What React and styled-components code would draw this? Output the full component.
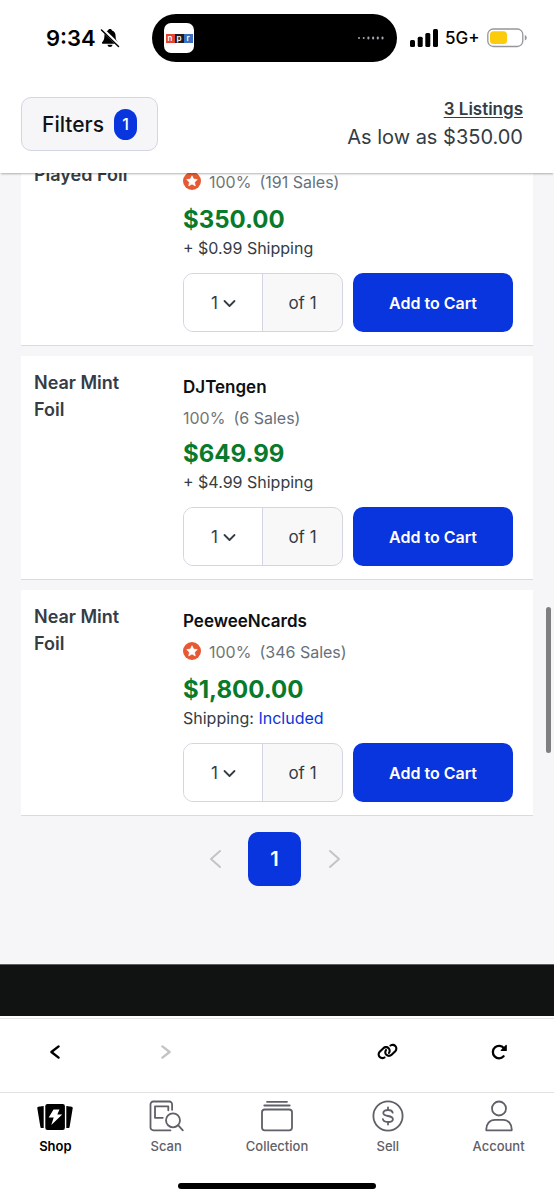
import React from 'react';
import styled, { createGlobalStyle, css } from 'styled-components';
import { FaLink } from 'react-icons/fa6';

const colors = {
  blue: '#0835dd',
  green: '#087a2b',
  ink: '#343c45',
  muted: '#66707c',
  border: '#d3d5e2',
  page: '#f6f6f9',
};

const GlobalStyle = createGlobalStyle`
  * {
    box-sizing: border-box;
  }

  body {
    margin: 0;
    background: #fff;
    color: ${colors.ink};
    font-family: Inter, "Liberation Sans", sans-serif;
  }

  button,
  select {
    font-family: inherit;
    cursor: pointer;
  }

  svg {
    display: block;
    flex-shrink: 0;
  }
`;

const Page = styled.div`
  display: flex;
  flex-direction: column;
  min-height: 100vh;
`;

/* status bar */

const StatusBar = styled.div`
  display: grid;
  grid-template-columns: 1fr 245px 1fr;
  align-items: center;
  padding: 14px 5px 14px 0;
  color: #000;
`;

const StatusSide = styled.div`
  display: flex;
  align-items: center;
  gap: ${(props) => props.$gap}px;
  padding-left: ${(props) => props.$start}px;
  white-space: nowrap;
`;

const Time = styled.span`
  font-size: 22px;
  font-weight: 600;
`;

const Network = styled.span`
  font-size: 17px;
  font-weight: 500;
`;

const Island = styled.div`
  display: flex;
  align-items: center;
  justify-content: space-between;
  height: 48px;
  padding: 0 12px;
  border-radius: 24px;
  background: #000;
`;

const NprTile = styled.div`
  display: flex;
  align-items: center;
  justify-content: center;
  width: 30px;
  height: 30px;
  border-radius: 7px;
  background: #fff;
`;

const NprLetter = styled.span`
  width: 9px;
  background: ${(props) => props.$color};
  color: #fff;
  font-size: 8px;
  font-weight: 600;
  line-height: 9px;
  text-align: center;
`;

/* listings header */

const Header = styled.header`
  position: sticky;
  top: 0;
  z-index: 1;
  display: flex;
  align-items: center;
  justify-content: space-between;
  padding: 20px 31px 21px 21px;
  background: #fff;
  box-shadow: 0 2px 2px -1px rgba(0, 0, 0, 0.3);
`;

const FiltersButton = styled.button`
  display: flex;
  align-items: center;
  gap: 10px;
  height: 54px;
  padding: 0 20px;
  border: 1px solid ${colors.border};
  border-radius: 10px;
  background: ${colors.page};
  color: #101216;
  font-size: 21px;
  font-weight: 500;
`;

const FilterCount = styled.span`
  width: 23px;
  border-radius: 12px;
  background: ${colors.blue};
  color: #fff;
  font-size: 16px;
  line-height: 31px;
`;

const Summary = styled.div`
  text-align: right;
`;

const ListingsLink = styled.a`
  display: block;
  color: ${colors.ink};
  font-size: 17px;
  font-weight: 600;
  line-height: 26px;
  text-underline-offset: 2px;
`;

const LowPrice = styled.div`
  font-size: 20px;
  line-height: 30px;
`;

/* listings */

const Main = styled.main`
  flex: 1;
  overflow: hidden;
  background: ${colors.page};
`;

const List = styled.ul`
  display: flex;
  flex-direction: column;
  gap: 10px;
  margin: -25px 21px 0;
  padding: 0;
  list-style: none;
`;

const Card = styled.li`
  display: grid;
  grid-template-columns: 149px 1fr;
  padding: 13px 20px 13px 13px;
  border-bottom: 1px solid #d9dbe0;
  background: #fff;
`;

const Condition = styled.div`
  max-width: 110px;
  font-size: 18px;
  font-weight: 600;
  line-height: 27px;
`;

const Details = styled.div`
  padding-top: ${(props) => (props.$compact ? 2 : 6)}px;
`;

const Seller = styled.div`
  color: #0d0f12;
  font-size: 17px;
  font-weight: 600;
  line-height: 24px;
`;

const Rating = styled.div`
  display: flex;
  align-items: center;
  gap: 8px;
  padding: 7px 0 ${(props) => (props.$starred ? 2 : 0)}px;
  color: ${colors.muted};
  font-size: 16px;
  line-height: 24px;

  > svg {
    margin-bottom: 3px;
  }
`;

const Percent = styled.span`
  color: #757575;
`;

const Price = styled.div`
  padding-top: 8px;
  color: ${colors.green};
  font-size: 24px;
  font-weight: 700;
  line-height: 32px;
`;

const Shipping = styled.div`
  font-size: 16px;
  line-height: 24px;
`;

const Included = styled.span`
  color: ${colors.blue};
`;

const Actions = styled.div`
  display: grid;
  grid-template-columns: 1fr 1fr;
  gap: 10px;
  padding-top: 13px;
`;

const Quantity = styled.label`
  position: relative;
  display: grid;
  grid-template-columns: 1fr 1fr;
  height: 59px;
  overflow: hidden;
  border: 1px solid ${colors.border};
  border-radius: 10px;
  background: #f8f8f9;
  font-size: 17px;
`;

const QuantitySelect = styled.select`
  appearance: none;
  padding: 0 0 0 27px;
  border: 0;
  border-right: 1px solid ${colors.border};
  border-radius: 0;
  background: #fff;
  color: ${colors.ink};
  font-size: 17px;
`;

const SelectArrow = styled.svg`
  position: absolute;
  top: 25px;
  left: 39px;
  pointer-events: none;
`;

const Available = styled.span`
  align-self: center;
  text-align: center;
`;

const CartButton = styled.button`
  padding: 0;
  border: 0;
  border-radius: 10px;
  background: ${colors.blue};
  color: #fff;
  font-size: 16px;
  font-weight: 600;
`;

const Pagination = styled.nav`
  display: flex;
  align-items: center;
  justify-content: center;
  gap: 21px;
  padding: 16px 5px 78px 0;
`;

const PageButton = styled.button`
  display: flex;
  align-items: center;
  justify-content: center;
  width: ${(props) => (props.$current ? 53 : 24)}px;
  height: 54px;
  padding: 0;
  border: 0;
  border-radius: 10px;
  background: ${(props) => (props.$current ? colors.blue : 'none')};
  color: ${(props) => (props.$current ? '#fff' : '#c3c4c8')};
  font-size: 20px;
  font-weight: 600;
`;

const Footer = styled.footer`
  height: 52px;
  border-top: 1px solid #5c6063;
  background: #111212;
`;

/* bottom bars */

const fiveColumns = css`
  display: grid;
  grid-template-columns: repeat(5, 1fr);
  justify-items: center;
`;

const BrowserBar = styled.div`
  ${fiveColumns}
  height: 75px;
  margin-top: 2px;
  border-top: 1px solid #e6e6e6;
  border-bottom: 1px solid #e2e2e3;
`;

const IconButton = styled.button`
  display: flex;
  align-items: center;
  justify-content: center;
  grid-column: ${(props) => props.$column};
  width: 44px;
  margin-bottom: 8px;
  padding: 0;
  border: 0;
  background: none;
  color: #000;

  &:disabled {
    color: #c4c4c4;
  }
`;

const TabBar = styled.nav`
  ${fiveColumns}
  padding-top: 6px;
`;

const Tab = styled.a`
  display: flex;
  flex-direction: column;
  align-items: center;
  gap: 3px;
  color: ${(props) => (props.$active ? '#000' : '#5f6068')};
  font-size: 13px;
  font-weight: ${(props) => (props.$active ? 600 : 500)};
  line-height: 20px;
  text-decoration: none;
`;

const HomeIndicator = styled.div`
  width: 198px;
  height: 6px;
  margin: 27px auto 11px;
  border-radius: 3px;
  background: #000;
`;

const ScrollThumb = styled.div`
  position: fixed;
  top: 607px;
  right: 3px;
  width: 5px;
  height: 146px;
  border-radius: 3px;
  background: #7f7f81;
`;

/* icons */

const BellSlash = () => (
  <svg width="20" height="20" viewBox="0 0 20 20">
    <path
      d="M10 1c-1.2 0-1.8.7-2 1.6C5.600 3.400 4.400 5.400 4.400 8c0 3.600-.9 4.700-2.100 6-.7.8-.3 1.800.8 1.800h13.800c1.100 0 1.500-1 .8-1.800-1.200-1.300-2.100-2.400-2.100-6 0-2.600-1.200-4.600-3.600-5.400C11.800 1.700 11.200 1 10 1zM7.500 16.800c.2 1.400 1.200 2.200 2.500 2.200s2.300-.8 2.500-2.200z"
      fill="#000"
    />
    <path d="M2.500 1.500 19.500 18" stroke="#fff" strokeWidth="3.600" />
    <path d="M1.500 2 18.500 18.500" stroke="#000" strokeWidth="1.500" strokeLinecap="round" />
  </svg>
);

const Signal = () => (
  <svg width="28" height="18" viewBox="0 0 28 18">
    <rect x="0" y="11" width="5" height="7" rx="1.500" />
    <rect x="7.700" y="7.700" width="5" height="10.300" rx="1.500" />
    <rect x="15.300" y="4" width="5" height="14" rx="1.500" />
    <rect x="23" y="0" width="5" height="18" rx="1.500" />
  </svg>
);

const Battery = () => (
  <svg width="40" height="20" viewBox="0 0 40 20" fill="none">
    <rect x=".8" y="1" width="35" height="17.500" rx="5.500" stroke="#96969a" strokeWidth="1.300" />
    <rect x="3" y="3.300" width="17" height="12.800" rx="3.500" fill="#fccb0b" />
    <path d="M37.800 7v5.500c1.200-.4 1.900-1.500 1.900-2.750S39 7.400 37.800 7z" fill="#96969a" />
  </svg>
);

const AudioDots = () => (
  <svg width="28" height="4" viewBox="0 0 28 4" fill="#aaa2b2">
    {[2, 6.7, 11.4, 16.1, 20.8, 25.5].map((x, i) => (
      <rect key={x} x={x - 1} y={i < 2 ? 1 : 0.5} width="2" height={i < 2 ? 2 : 3} rx="1" />
    ))}
  </svg>
);

const StarBadge = () => (
  <svg width="18" height="18" viewBox="0 0 18 18">
    <circle cx="9" cy="9" r="9" fill="#e65a33" />
    <path
      d="m9 3.700 1.600 3.400 3.700.5-2.700 2.600.7 3.700L9 12.100l-3.300 1.800.7-3.700-2.700-2.600 3.700-.5z"
      fill="#fff"
      stroke="#fff"
      strokeWidth=".6"
      strokeLinejoin="round"
    />
  </svg>
);

const Chevron = ({ flip, width, height, stroke }) => (
  <svg
    width={width}
    height={height}
    viewBox={`0 0 ${width} ${height}`}
    fill="none"
    stroke="currentColor"
    strokeWidth={stroke}
    strokeLinecap="round"
    strokeLinejoin="round"
  >
    <path
      d={
        flip
          ? `M${stroke} ${stroke} ${width - stroke} ${height / 2} ${stroke} ${height - stroke}`
          : `M${width - stroke} ${stroke} ${stroke} ${height / 2} ${width - stroke} ${height - stroke}`
      }
    />
  </svg>
);

const Reload = () => (
  <svg width="16" height="16" viewBox="0 0 16 16">
    <path
      d="M12.900 4.200A6.200 6.200 0 1 0 12.600 12.300"
      fill="none"
      stroke="currentColor"
      strokeWidth="2.300"
      strokeLinecap="round"
    />
    <path
      d="M15.200 1.500v4.900h-4.900z"
      fill="currentColor"
      stroke="currentColor"
      strokeWidth="1.200"
      strokeLinejoin="round"
    />
  </svg>
);

const lineProps = {
  fill: 'none',
  stroke: 'currentColor',
  strokeWidth: 1.8,
  strokeLinecap: 'round',
  strokeLinejoin: 'round',
};

const ShopIcon = () => (
  <svg width="36" height="34" viewBox="0 0 36 34" fill="currentColor">
    <rect x="8.300" y="5" width="19.600" height="26" rx="2.200" />
    <path d="M1.300 7.800 6.700 7v22h-2c-.7 0-1.200-.4-1.300-1.100L.3 9.300C.2 8.500.6 7.900 1.300 7.800z" />
    <path d="m34.700 7.800-5.400-.8v22h2c.7 0 1.200-.4 1.300-1.100l3.100-18.600c.1-.8-.3-1.400-1-1.500z" />
    <path d="M16.500 10.500h6l-2.200 5h4.900L14.300 26l2.400-7.500h-5z" fill="#fff" />
  </svg>
);

const ScanIcon = () => (
  <svg width="36" height="34" viewBox="-1 0 36 34" {...lineProps}>
    <path d="M21.500 31.300H4.300A2.800 2.800 0 0 1 1.500 28.500V5.300a2.800 2.800 0 0 1 2.800-2.800h16a2.800 2.800 0 0 1 2.800 2.800v5.500" />
    <path d="M13.800 18.800H6V7.300h13.300v4" />
    <circle cx="24" cy="21.300" r="7" />
    <path d="m29.300 26.300 4.500 5" />
  </svg>
);

const CollectionIcon = () => (
  <svg width="36" height="34" viewBox="0 0 36 34" {...lineProps}>
    <path d="M8 2.800h20M5.300 6.500h25.400" />
    <rect x="3" y="10.500" width="30" height="20.800" rx="2.800" />
  </svg>
);

const SellIcon = () => (
  <svg width="36" height="34" viewBox="0 0 36 34" {...lineProps}>
    <circle cx="18" cy="17" r="14.600" />
    <path d="M18 8.500v2.500M18 23v2.500M22.700 13.700c-.4-1.700-2-2.700-4.700-2.700-2.800 0-4.700 1.100-4.700 3s1.700 2.500 4.700 3 4.900 1.300 4.900 3.200-2.100 2.800-4.900 2.800-4.800-1-5.100-2.800" />
  </svg>
);

const AccountIcon = () => (
  <svg width="36" height="34" viewBox="0 0 36 34" {...lineProps}>
    <circle cx="18" cy="9.500" r="7" />
    <path d="M5.300 31.300c-.4-6.600 3.600-10.500 8.700-10.500h8c5.100 0 9.100 3.900 8.700 10.500z" />
  </svg>
);

/* content */

const listings = [
  { id: 1, condition: 'Played Foil', starred: true, sales: 191, price: '$350.00', shipping: '$0.99' },
  {
    id: 2,
    condition: 'Near Mint Foil',
    seller: 'DJTengen',
    sales: 6,
    price: '$649.99',
    shipping: '$4.99',
  },
  {
    id: 3,
    condition: 'Near Mint Foil',
    seller: 'PeeweeNcards',
    starred: true,
    sales: 346,
    price: '$1,800.00',
  },
];

const tabs = [
  { label: 'Shop', icon: ShopIcon, active: true },
  { label: 'Scan', icon: ScanIcon },
  { label: 'Collection', icon: CollectionIcon },
  { label: 'Sell', icon: SellIcon },
  { label: 'Account', icon: AccountIcon },
];

const Listing = ({ condition, seller, starred, sales, price, shipping }) => (
  <Card>
    <Condition>{condition}</Condition>
    <Details $compact={!seller}>
      {seller && <Seller>{seller}</Seller>}
      <Rating $starred={starred}>
        {starred && <StarBadge />}
        <Percent>100%</Percent>
        <span>({sales} Sales)</span>
      </Rating>
      <Price>{price}</Price>
      <Shipping>
        {shipping ? (
          `+ ${shipping} Shipping`
        ) : (
          <>
            Shipping: <Included>Included</Included>
          </>
        )}
      </Shipping>
      <Actions>
        <Quantity>
          <QuantitySelect aria-label="Quantity" defaultValue="1">
            <option value="1">1</option>
          </QuantitySelect>
          <SelectArrow
            width="13"
            height="9"
            viewBox="0 0 13 9"
            fill="none"
            stroke={colors.ink}
            strokeWidth="1.800"
            strokeLinecap="round"
            strokeLinejoin="round"
          >
            <path d="m1.500 2 5 5 5-5" />
          </SelectArrow>
          <Available>of 1</Available>
        </Quantity>
        <CartButton type="button">Add to Cart</CartButton>
      </Actions>
    </Details>
  </Card>
);

const App = () => (
  <Page>
    <GlobalStyle />
    <StatusBar>
      <StatusSide $start={46} $gap={4}>
        <Time>9:34</Time>
        <BellSlash />
      </StatusSide>
      <Island>
        <NprTile>
          <NprLetter $color="#e2442f">n</NprLetter>
          <NprLetter $color="#1c1c22">p</NprLetter>
          <NprLetter $color="#3b6fc0">r</NprLetter>
        </NprTile>
        <AudioDots />
      </Island>
      <StatusSide $start={13} $gap={7}>
        <Signal />
        <Network>5G+</Network>
        <Battery />
      </StatusSide>
    </StatusBar>

    <Header>
      <FiltersButton type="button">
        Filters <FilterCount>1</FilterCount>
      </FiltersButton>
      <Summary>
        <ListingsLink href="#listings">3 Listings</ListingsLink>
        <LowPrice>As low as $350.00</LowPrice>
      </Summary>
    </Header>

    <Main>
      <List id="listings">
        {listings.map((listing) => (
          <Listing key={listing.id} {...listing} />
        ))}
      </List>
      <Pagination aria-label="Pagination">
        <PageButton type="button" disabled aria-label="Previous page">
          <Chevron width={13} height={20} stroke={2} />
        </PageButton>
        <PageButton type="button" $current>
          1
        </PageButton>
        <PageButton type="button" disabled aria-label="Next page">
          <Chevron flip width={13} height={20} stroke={2} />
        </PageButton>
      </Pagination>
    </Main>
    <Footer />

    <BrowserBar>
      <IconButton type="button" $column={1} aria-label="Back">
        <Chevron width={12} height={16} stroke={2.4} />
      </IconButton>
      <IconButton type="button" $column={2} disabled aria-label="Forward">
        <Chevron flip width={12} height={16} stroke={2.4} />
      </IconButton>
      <IconButton type="button" $column={4} aria-label="Copy link">
        <FaLink size={21} />
      </IconButton>
      <IconButton type="button" $column={5} aria-label="Reload">
        <Reload />
      </IconButton>
    </BrowserBar>

    <TabBar aria-label="Main">
      {tabs.map(({ label, icon: Icon, active }) => (
        <Tab key={label} href={`#${label.toLowerCase()}`} $active={active}>
          <Icon />
          {label}
        </Tab>
      ))}
    </TabBar>
    <HomeIndicator />
    <ScrollThumb />
  </Page>
);

export default App;
